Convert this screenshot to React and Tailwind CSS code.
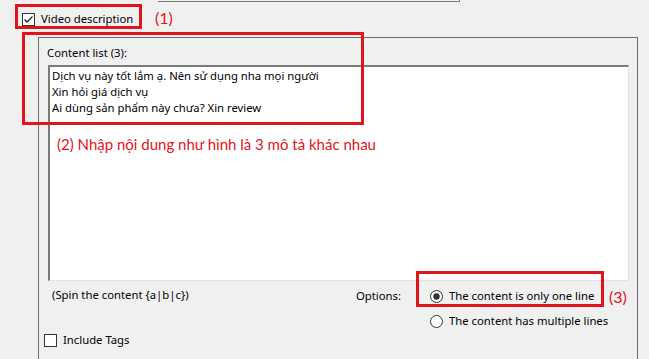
import React from "react";

const CheckBox = ({ checked }) => (
  <svg width="13" height="13" viewBox="0 0 13 13" className="shrink-0">
    <rect x="0.5" y="0.5" width="12" height="12" fill="#fff" stroke="#333" />
    {checked && <path d="M2.5 6.5 L5 9 L10.5 3.5" fill="none" stroke="#222" strokeWidth="1.3" />}
  </svg>
);

const Radio = ({ checked }) => (
  <svg width="13" height="13" viewBox="0 0 13 13" className="shrink-0">
    <circle cx="6.5" cy="6.5" r="6" fill="#fff" stroke="#333" />
    {checked && <circle cx="6.5" cy="6.5" r="3.2" fill="#333" />}
  </svg>
);

export default function App() {
  return (
    <div
      className="relative w-[649px] h-[359px] overflow-hidden bg-[#f0f0f0] text-[11.3px] text-black"
      style={{ fontFamily: '"Noto Sans", "Segoe UI", sans-serif' }}
    >
      {/* previous control fragment */}
      <div className="ml-[158px] w-[302px] h-[2px] border-b border-r border-[#7a7a7a]" />

      {/* Video description checkbox */}
      <div className="flex items-center gap-[6px] pl-[22px] mt-[9px] h-[16px]">
        <CheckBox checked />
        <span className="leading-none">Video description</span>
      </div>

      {/* Group box */}
      <div className="ml-[38px] mt-[10px] w-[600px] h-[330px] border-t border-l border-r border-[#6e6e6e] pl-[8px] pr-[8px]">
        <div className="pt-[7px] h-[27px] leading-[16px]">Content list (3):</div>
        <div className="ml-px w-[581px] h-[216px] bg-white border-t-2 border-l-2 border-t-[#7a7a7a] border-l-[#7a7a7a] border-r border-b border-r-[#e3e3e3] border-b-[#e3e3e3] pl-[2px] pt-[1px] leading-[16px]">
          <div>Dịch vụ này tốt lắm ạ. Nên sử dụng nha mọi người</div>
          <div>Xin hỏi giá dịch vụ</div>
          <div>Ai dùng sản phẩm này chưa? Xin review</div>
        </div>
        <div className="flex mt-[6px]">
          <div className="w-[309px] pl-[5px] leading-[16px]">(Spin the content {"{a|b|c}"})</div>
          <div className="w-[74px] leading-[16px] pt-px">Options:</div>
          <div className="flex flex-col gap-[9px] pt-[1px]">
            <div className="flex items-center gap-[6px] h-[16px]">
              <Radio checked />
              <span>The content is only one line</span>
            </div>
            <div className="flex items-center gap-[6px] h-[16px]">
              <Radio />
              <span>The content has multiple lines</span>
            </div>
          </div>
        </div>
        <div className="flex items-center gap-[6px] mt-[3px] -ml-[3px] h-[16px]">
          <CheckBox />
          <span>Include Tags</span>
        </div>
      </div>

      {/* annotations */}
      <div className="absolute left-[15px] top-[4px] w-[127px] h-[25px] border-[3px] border-[#e0141c]" />
      <div
        className="absolute left-[155px] top-[8px] text-[16px] leading-[20px] text-[#e0141c]"
        style={{ fontFamily: 'Lato, "Open Sans", sans-serif' }}
      >
        (1)
      </div>
      <div className="absolute left-[22px] top-[32px] w-[342px] h-[93px] border-[3px] border-[#e0141c]" />
      <div
        className="absolute left-[57px] top-[135px] text-[15px] leading-[18px] text-[#e0141c]"
        style={{ fontFamily: 'Lato, "Open Sans", sans-serif' }}
      >
        (2) Nhập nội dung như hình là 3 mô tả khác nhau
      </div>
      <div className="absolute left-[416px] top-[271px] w-[188px] h-[36px] border-[3px] border-[#e0141c]" />
      <div
        className="absolute left-[609px] top-[287px] text-[16px] leading-[20px] text-[#e0141c]"
        style={{ fontFamily: 'Lato, "Open Sans", sans-serif' }}
      >
        (3)
      </div>
    </div>
  );
}
